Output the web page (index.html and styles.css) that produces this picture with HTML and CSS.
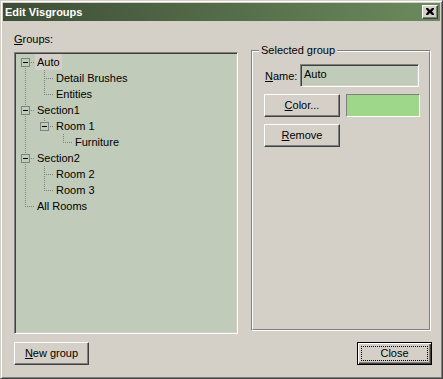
FILE: index.html
```html
<!DOCTYPE html>
<html>
<head>
<meta charset="utf-8">
<link rel="stylesheet" href="styles.css">
</head>
<body>
<div class="window">
  <div class="titlebar">
    <span class="title">Edit Visgroups</span>
    <span class="xbtn"><svg width="8" height="7" viewBox="0 0 8 7"><path d="M0 0h2l2 2 2-2h2v1L6 3.5 8 6v1H6L4 5 2 7H0V6l2-2.5L0 1z" fill="#000"/></svg></span>
  </div>
  <div class="client">
    <div class="main">
      <div class="left">
        <div class="label"><u>G</u>roups:</div>
        <div class="tree">
          <div class="row"><span class="c top"><i class="bx"></i></span><span class="lbl sel">Auto</span></div>
          <div class="row"><span class="c pipe"></span><span class="c tee"></span><span class="lbl">Detail Brushes</span></div>
          <div class="row"><span class="c pipe"></span><span class="c elbow"></span><span class="lbl">Entities</span></div>
          <div class="row"><span class="c tee"><i class="bx"></i></span><span class="lbl">Section1</span></div>
          <div class="row"><span class="c pipe"></span><span class="c elbow"><i class="bx"></i></span><span class="lbl">Room 1</span></div>
          <div class="row"><span class="c pipe"></span><span class="c"></span><span class="c elbow"></span><span class="lbl">Furniture</span></div>
          <div class="row"><span class="c tee"><i class="bx"></i></span><span class="lbl">Section2</span></div>
          <div class="row"><span class="c pipe"></span><span class="c tee"></span><span class="lbl">Room 2</span></div>
          <div class="row"><span class="c pipe"></span><span class="c elbow"></span><span class="lbl">Room 3</span></div>
          <div class="row"><span class="c elbow"></span><span class="lbl">All Rooms</span></div>
        </div>
      </div>
      <div class="right">
        <div class="groupbox">
          <span class="legend">Selected group</span>
          <div class="gb-inner">
            <div class="frow">
              <span class="flabel"><u>N</u>ame:</span>
              <span class="textbox">Auto</span>
            </div>
            <div class="frow">
              <span class="btn gb-btn"><span><u>C</u>olor...</span></span>
              <span class="swatch"></span>
            </div>
            <div class="frow">
              <span class="btn gb-btn"><span><u>R</u>emove</span></span>
            </div>
          </div>
        </div>
      </div>
    </div>
    <div class="footer">
      <span class="btn"><span><u>N</u>ew group</span></span>
      <span class="btn default"><span class="focus">Close</span></span>
    </div>
  </div>
</div>
</body>
</html>
```

FILE: styles.css
```css
* { box-sizing: border-box; }
html, body { margin: 0; padding: 0; background: #d4d0c8; }
body {
  font-family: "Liberation Sans", Arial, sans-serif;
  font-size: 11px;
  color: #000;
}
u { text-decoration: underline; text-underline-offset: 1px; }

.window {
  width: 443px;
  height: 379px;
  background: #d4d0c8;
  border: 1px solid;
  border-color: #d4d0c8 #404040 #404040 #d4d0c8;
  box-shadow: inset 1px 1px 0 #fff, inset -1px -1px 0 #808080;
  padding: 2px;
  display: flex;
  flex-direction: column;
}

.titlebar {
  height: 18px;
  flex: none;
  background: linear-gradient(to right, #3d4d36, #6b8b5c);
  display: flex;
  align-items: center;
  justify-content: space-between;
  padding: 0 2px 0 2px;
}
.title {
  color: #fff;
  font-weight: bold;
  font-size: 11px;
  line-height: 13px;
}
.xbtn {
  width: 16px;
  height: 14px;
  background: #d4d0c8;
  border: 1px solid;
  border-color: #fff #404040 #404040 #fff;
  box-shadow: inset -1px -1px 0 #808080;
  display: flex;
  align-items: center;
  justify-content: center;
  padding: 0 1px 1px 0;
}
.xbtn svg { display: block; }

.client {
  flex: 1;
  padding: 12px 8px 0 11px;
  display: flex;
  flex-direction: column;
}
.main {
  display: flex;
  gap: 13px;
}
.left { width: 224px; flex: none; }
.label {
  height: 13px;
  line-height: 13px;
  margin-bottom: 6px;
}
.tree {
  height: 282px;
  background: #c0cbb9;
  border: 1px solid;
  border-color: #808080 #fff #fff #808080;
  box-shadow: inset 1px 1px 0 #404040, inset -1px -1px 0 #d4d0c8;
  padding: 1px 1px;
}
.row {
  display: flex;
  height: 16px;
  align-items: center;
}
.c {
  width: 19px;
  height: 16px;
  flex: none;
  display: flex;
  align-items: center;
  --v: repeating-linear-gradient(to bottom, #808080 0 1px, transparent 1px 2px);
  --h: repeating-linear-gradient(to right, #808080 0 1px, transparent 1px 2px);
}
.pipe { background: var(--v) 9px 0 / 1px 16px no-repeat; }
.tee { background: var(--h) 11px 8px / 8px 1px no-repeat, var(--v) 9px 0 / 1px 16px no-repeat; }
.elbow { background: var(--h) 11px 8px / 8px 1px no-repeat, var(--v) 9px 0 / 1px 9px no-repeat; }
.top { background: var(--h) 11px 8px / 8px 1px no-repeat, var(--v) 9px 8px / 1px 8px no-repeat; }
.bx {
  width: 9px;
  height: 9px;
  margin-left: 5px;
  border: 1px solid #808080;
  background: #c0cbb9;
  display: flex;
  align-items: center;
  justify-content: center;
}
.bx::before {
  content: "";
  width: 5px;
  height: 1px;
  background: #000;
}
.lbl {
  line-height: 16px;
  padding: 0 2px;
  white-space: nowrap;
}
.sel { background: #d4d0c8; }

.right { width: 180px; flex: none; padding-top: 17px; }
.groupbox {
  position: relative;
  height: 281px;
  border: 1px solid;
  border-color: #808080 #fff #fff #808080;
}
.gb-inner {
  height: 100%;
  border: 1px solid;
  border-color: #fff #808080 #808080 #fff;
  padding: 12px 0 0 11px;
  display: flex;
  flex-direction: column;
  gap: 7px;
}
.legend {
  position: absolute;
  left: 7px;
  top: -7px;
  padding: 0 2px 0 2px;
  background: #d4d0c8;
  line-height: 13px;
}
.frow {
  display: flex;
  align-items: center;
  height: 23px;
}
.flabel { width: 36px; padding-left: 1px; flex: none; }
.textbox {
  width: 119px;
  height: 23px;
  background: #c0cbb9;
  border: 1px solid;
  border-color: #808080 #fff #fff #808080;
  box-shadow: inset 1px 1px 0 #404040, inset -1px -1px 0 #d4d0c8;
  padding: 2px 3px 0;
  line-height: 15px;
}
.swatch {
  width: 74px;
  height: 23px;
  margin-left: 6px;
  background: #9fd78a;
  border: 1px solid;
  border-color: #808080 #fff #fff #808080;
}

.btn {
  width: 75px;
  height: 23px;
  background: #d4d0c8;
  border: 1px solid;
  border-color: #fff #404040 #404040 #fff;
  box-shadow: inset -1px -1px 0 #808080;
  display: flex;
  align-items: center;
  justify-content: center;
  line-height: 13px;
  padding-bottom: 1px;
}
.gb-btn { width: 76px; }
.btn.default {
  border: 1px solid #000;
  box-shadow: inset 1px 1px 0 #fff, inset -1px -1px 0 #404040, inset -2px -2px 0 #808080;
  padding: 3px;
}
.focus {
  flex: 1;
  align-self: stretch;
  border: 1px dotted #000;
  display: flex;
  align-items: center;
  justify-content: center;
}

.footer {
  display: flex;
  justify-content: space-between;
  margin-top: 8px;
}
```
